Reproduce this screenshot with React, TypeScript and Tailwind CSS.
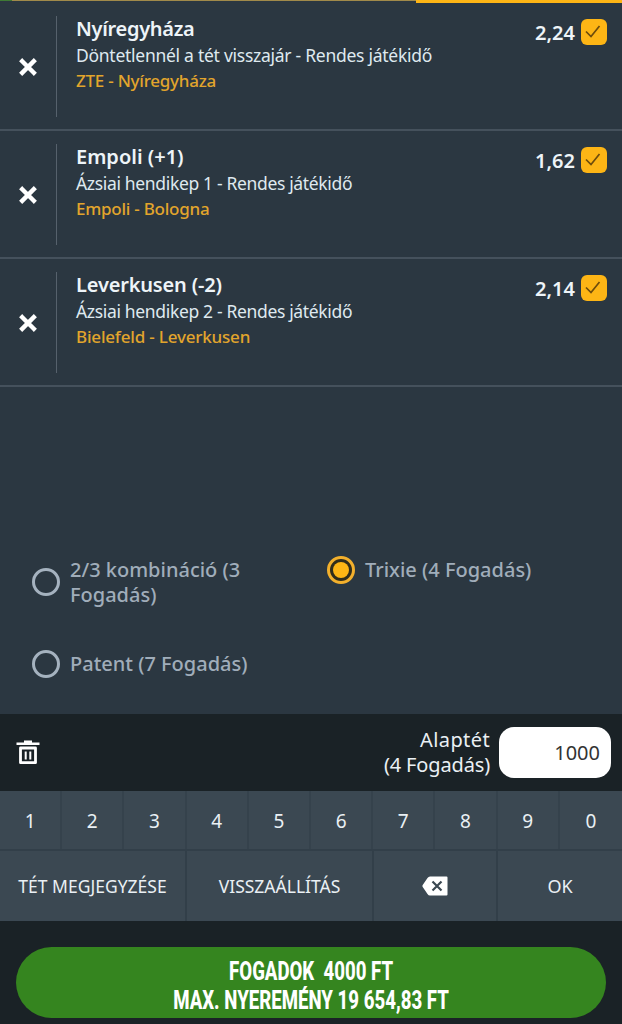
import React from "react";

type Bet = { name: string; market: string; match: string; odds: string; nameCls: string; marketCls: string; matchCls: string };

const bets: Bet[] = [
  { name: "Nyíregyháza", market: "Döntetlennél a tét visszajár - Rendes játékidő", match: "ZTE - Nyíregyháza", odds: "2,24", nameCls: "tracking-[-0.3px]", marketCls: "tracking-[-0.27px]", matchCls: "tracking-[-0.24px]" },
  { name: "Empoli (+1)", market: "Ázsiai hendikep 1 - Rendes játékidő", match: "Empoli - Bologna", odds: "1,62", nameCls: "tracking-normal", marketCls: "tracking-[-0.34px]", matchCls: "tracking-[-0.25px]" },
  { name: "Leverkusen (-2)", market: "Ázsiai hendikep 2 - Rendes játékidő", match: "Bielefeld - Leverkusen", odds: "2,14", nameCls: "tracking-[-0.17px]", marketCls: "tracking-[-0.34px]", matchCls: "tracking-[-0.19px]" },
];

function BetRow({ bet }: { bet: Bet }) {
  return (
    <div className="flex h-32 border-b-2 border-[#45515c] pt-[13px]">
      <button className="flex h-[101px] w-[57px] shrink-0 items-center justify-center border-r border-[#56616c]">
        <svg width="18" height="18" viewBox="0 0 18 18" className="block">
          <path d="M3.200 3.200 14.800 14.800M14.800 3.200 3.200 14.800" stroke="#fff" strokeWidth="4.400" strokeLinecap="square" />
        </svg>
      </button>
      <div className="flex flex-1 flex-col items-start whitespace-nowrap pl-[19px]">
        <span className={`text-[20px] font-semibold leading-[25px] text-[#eef4f8] ${bet.nameCls}`}>{bet.name}</span>
        <span className={`mt-[2px] text-[17.5px] leading-[25px] text-[#dfe9ef] ${bet.marketCls}`}>{bet.market}</span>
        <span className={`text-[17px] font-medium leading-[25px] text-[#e2a52c] ${bet.matchCls}`}>{bet.match}</span>
      </div>
      <div className="flex h-[26px] items-center pr-[15px] pt-[5px]">
        <span className="mr-[6px] pt-[2px] text-[20px] font-semibold leading-[26px] text-[#eef4f8]">{bet.odds}</span>
        <span className="flex size-[26px] items-center justify-center rounded-[6px] bg-[#fdb515]">
          <svg width="26" height="26" viewBox="0 0 26 26" fill="none">
            <path d="M5 12.5 10 17.5 18.500 7" stroke="#6e4c0c" strokeWidth="1.7" />
          </svg>
        </span>
      </div>
    </div>
  );
}

function Radio({ on = false }: { on?: boolean }) {
  return on ? (
    <span className="flex size-7 shrink-0 items-center justify-center rounded-full border-[3px] border-[#f3b02c] bg-[#2f2c1c]">
      <span className="size-4 rounded-full bg-[#fdb515]" />
    </span>
  ) : (
    <span className="size-7 shrink-0 rounded-full border-[3px] border-[#a5b2bf]" />
  );
}

const digits = ["1", "2", "3", "4", "5", "6", "7", "8", "9", "0"];

export default function App() {
  return (
    <div className="flex h-[1024px] w-[622px] flex-col overflow-hidden bg-[#2b3741] font-['Noto_Sans',sans-serif]">
      <div className="flex h-[3px] items-start">
        <div className="h-px w-3 bg-[#3f7a35]" />
        <div className="h-px flex-1 bg-[#a18a4a]" />
        <div className="h-[3px] w-[206px] bg-[#fdb515]" />
      </div>
      {bets.map((b) => <BetRow key={b.name} bet={b} />)}

      <div className="flex flex-1 flex-col pl-8 pt-[170px] text-[20px] font-medium leading-[25px] text-[#a0adba]">
        <div className="flex">
          <div className="flex w-[295px] items-center gap-[10px]">
            <Radio />
            <span>2/3 kombináció (3<br />Fogadás)</span>
          </div>
          <div className="flex h-[26px] items-center gap-[10px]">
            <Radio on />
            <span className="-mt-px">Trixie (4 Fogadás)</span>
          </div>
        </div>
        <div className="mt-[43px] flex items-center gap-[10px]">
          <Radio />
          <span className="-mt-px">Patent (7 Fogadás)</span>
        </div>
      </div>

      <div className="flex h-[77px] items-center bg-[#1a2226] pl-4 pr-[11px]">
        <svg width="24" height="25" viewBox="0 0 24 25" fill="none">
          <path d="M0.5 2.500H8V0.500H16V2.500H23.500V5H0.500Z" fill="#fff" />
          <path d="M4.500 8H19.500V22.700H4.500Z" stroke="#fff" strokeWidth="2.800" strokeLinejoin="round" />
          <path d="M9.700 11.500V19.500M14.300 11.500V19.500" stroke="#fff" strokeWidth="2" />
        </svg>
        <div className="-mt-[2px] flex-1 pr-[9px] text-right text-[20px] leading-[25px] text-[#eaf0f4]">
          <span className="tracking-[0.4px]">Alaptét</span><br />
          <span className="tracking-[-0.15px]">(4 Fogadás)</span>
        </div>
        <div className="flex h-[51px] w-[112px] items-center justify-end rounded-[15px] bg-white pr-[11px] text-[20px] text-[#333]">1000</div>
      </div>

      <div className="grid h-[60px] grid-cols-10 border-b-2 border-[#323f49] bg-[#3b4852] text-[19px] text-[#eaf0f4]">
        {digits.map((d) => (
          <div key={d} className="flex items-center justify-center border-r-2 border-[#35424c] pt-[2px] last:border-r-0">{d}</div>
        ))}
      </div>
      <div className="grid h-[70px] grid-cols-[187px_187px_124px_124px] bg-[#3b4852] text-[17.5px] text-[#eaf0f4]">
        <div className="flex items-center justify-center whitespace-nowrap border-r-2 border-[#323f49]">TÉT MEGJEGYZÉSE</div>
        <div className="flex items-center justify-center whitespace-nowrap border-r-2 border-[#323f49]">VISSZAÁLLÍTÁS</div>
        <div className="flex items-center justify-center border-r-2 border-[#323f49]">
          <svg width="26" height="20" viewBox="0 0 26 20">
            <path d="M8 .5H24.500Q25.500.5 25.500 1.500V18.500Q25.500 19.500 24.500 19.500H8Q6.500 19.500 5.500 18L.7 11Q0 10 .7 9L5.500 2Q6.500.5 8 .5Z" fill="#fff" />
            <path d="M10.500 5.500 19.500 14.500M19.500 5.500 10.500 14.500" stroke="#3b4852" strokeWidth="2.200" />
          </svg>
        </div>
        <div className="flex items-center justify-center text-[18px]">OK</div>
      </div>
      <div className="h-[103px] bg-[#1a2226] px-4 pt-[26px]">
        <button className="flex h-[71px] w-[590px] flex-col items-center justify-center rounded-full bg-[#35851f] pt-[6px] font-['Roboto',sans-serif] text-[25px] font-extrabold leading-[29px] text-white">
          <span className="scale-x-[0.745] whitespace-pre">FOGADOK  4000 FT</span>
          <span className="scale-x-[0.745] whitespace-nowrap">MAX. NYEREMÉNY 19 654,83 FT</span>
        </button>
      </div>
    </div>
  );
}
